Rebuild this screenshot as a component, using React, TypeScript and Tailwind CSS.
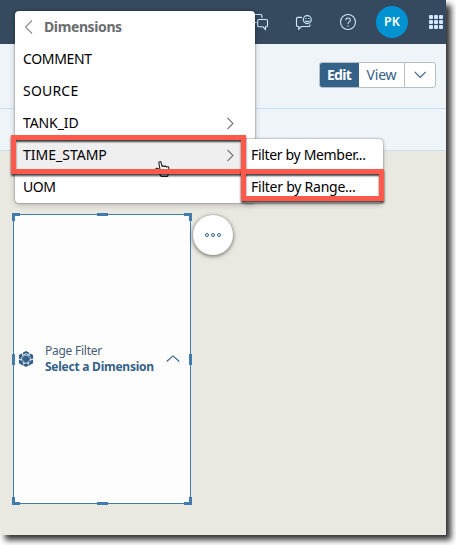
import React from "react";

function Chevron({ dir, className }: { dir: "left" | "right" | "up" | "down"; className: string }) {
  const d = {
    left: "M8 .5 1.5 7 8 13.5",
    right: "M1.5 1 7 6.5 1.5 12",
    up: "M.7 6.5 7 .9l6.3 5.6",
    down: "M.7.9 6.2 6.5 11.7.9",
  }[dir];
  return (
    <svg className={className} fill="none" stroke="currentColor" strokeWidth="1.1" aria-hidden="true">
      <path d={d} />
    </svg>
  );
}

function Header() {
  return (
    <header className="flex h-11 items-center bg-[#354a5f] pl-[252px] text-[#d1e8ff]">
      <svg className="h-5 w-[18px] shrink-0" viewBox="0 0 18 20" fill="none" stroke="currentColor" strokeWidth="1.1">
        <path d="M0 2.5h8.7q1.2 0 1.2 1.2v2.2M0 10.5h4.5" />
        <path d="M7 7.5h7.2q1.3 0 1.3 1.3v4.7q0 1.3-1.3 1.3h-.7v2.7l-2.7-2.7H7q-1.3 0-1.3-1.3V8.8q0-1.3 1.3-1.3Z" />
      </svg>
      <svg className="ml-[25px] h-5 w-[18px] shrink-0" viewBox="0 0 18 20" fill="none" stroke="currentColor" strokeWidth="1.1">
        <path d="M7 5.4H2.8q-1.3 0-1.3 1.3v6.5q0 1.3 1.3 1.3h1v2.7l2.7-2.7h7.2q1.3 0 1.3-1.3v-.7" />
        <circle cx="12.3" cy="7.6" r="4" />
        <path d="M10 8.6q2.3 2.2 4.6 0M10.8 6.1v.9M13.8 6.1v.9" />
      </svg>
      <svg className="ml-[26px] h-[18px] w-[18px] shrink-0" viewBox="0 0 18 18" fill="none" stroke="currentColor" strokeWidth="1.1">
        <circle cx="9" cy="9" r="7.5" />
        <path d="M6.8 7.2c0-3 4.7-2.8 4.5 0-.1 1.7-2.3 1.8-2.3 3.7M9 12.2v1.2" />
      </svg>
      <div className="ml-[19px] flex h-8 w-8 shrink-0 items-center justify-center rounded-full bg-[#0092d1] text-[12.5px] font-semibold text-white">PK</div>
      <div className="ml-[21px] grid shrink-0 grid-cols-3 gap-[1.5px]">
        {Array.from({ length: 9 }, (_, i) => (
          <span key={i} className="h-[3.7px] w-[3.7px] rounded-[1px] bg-current" />
        ))}
      </div>
    </header>
  );
}

const dimensions = [
  { name: "COMMENT", tracking: "tracking-[-0.34px]" },
  { name: "SOURCE", tracking: "tracking-[0.2px]" },
  { name: "TANK_ID", tracking: "tracking-[-0.1px]", nested: true },
  { name: "TIME_STAMP", tracking: "tracking-[0px]", nested: true, active: true },
  { name: "UOM", tracking: "tracking-[-0.5px]" },
];

function DimensionMenu() {
  return (
    <nav className="absolute left-[15px] top-[11px] h-[192px] w-[240px] rounded-[4px] bg-white text-[14px] leading-5 text-black shadow-[0_0_2px_#0008,0_2px_6px_#0003]">
      <div className="flex h-8 items-center pl-[9px] text-[#6a6d70]">
        <Chevron dir="left" className="h-[14px] w-[9px] text-[#8b8d8f]" />
        <span className="ml-[11px] font-bold tracking-[-0.39px]">Dimensions</span>
      </div>
      {dimensions.map((item) => (
        <div key={item.name} className={"flex h-8 items-center justify-between pl-2 pr-[20px] " + (item.active ? "bg-[#efefef]" : "")}>
          <span className={item.tracking}>{item.name}</span>
          {item.nested && <Chevron dir="right" className="h-[13px] w-[9px] text-[#75787a]" />}
        </div>
      ))}
    </nav>
  );
}

function PageFilter() {
  return (
    <section className="absolute left-[13px] top-[214px] flex h-[290px] w-[178px] items-center whitespace-nowrap border border-[#427cac] bg-[#fdfdfd] pl-1 text-[12px]">
      <svg className="h-4 w-4 shrink-0" viewBox="0 0 16 16" fill="#346187">
        <path d="m8 0 3 1.5v2L8 2.3 5 3.5v-2ZM.9 4 4.3 2.2v2.4L2.6 8.3.9 7.4Zm10.8-1.8L15.1 4v3.4l-1.7.9-1.7-3.7ZM.9 8.6l2.3 1 2.1 3-.4 1.8-4-2.2Zm14.2 0-2.3 1-2.1 3 .4 1.8 4-2.2ZM8 12.6l2.4.4.3 1.6L8 16l-2.7-1.4.3-1.6Z" />
        <path d="m8 3.1 4.3 2.4v4.9L8 12.8l-4.3-2.4V5.5Z" />
        <path d="M4.2 7.2 5.7 5 8 4.3l2.3.7 1.5 2.2M4.5 8.5l1.3 2.6L8 12l2.2-.9 1.3-2.6" fill="none" stroke="#c3d2de" strokeWidth=".7" />
      </svg>
      <div className="ml-[11px] w-[109px]">
        <div className="leading-4 tracking-[-0.25px] text-[#475e75]">Page Filter</div>
        <div className="font-bold leading-4 tracking-[-0.25px] text-[#346187]">Select a Dimension</div>
      </div>
      <Chevron dir="up" className="ml-[12px] h-2 w-[14px] text-[#346187]" />
      <svg className="absolute -left-[2px] -top-[2px] h-[292px] w-[180px]" fill="#427cac">
        <path d="M0 0h8v3H3v5H0ZM172 0h8v8h-3V3h-5ZM0 284h3v5h5v3H0ZM177 284h3v8h-8v-3h5ZM85 0h11v3H85ZM85 289h11v3H85ZM0 141h3v11H0ZM177 141h3v11h-3Z" />
      </svg>
    </section>
  );
}

function HandCursor() {
  return (
    <svg className="absolute left-[155px] top-[160px] h-[18px] w-[17px]" viewBox="0 0 17 18" fill="white" stroke="#202020" strokeWidth="1.1" strokeLinejoin="round">
      <path d="M5.2 10.5 3.9 3.2c-.3-1.7 1.8-2.1 2.2-.5l1 4c.3-1.3 2-1 2.2.1.4-1 2-.8 2.2.3.7-.8 2.3-.3 2.3.8v4l-1.2 4.5H6.2L4 12.6 1.1 9.8c-.8-1.2.5-2 1.7-1.3Z" />
      <path d="M8 11v3M10 11v3M12 11v3" />
    </svg>
  );
}

export default function App() {
  return (
    <div className="h-[545px] w-[456px] overflow-hidden bg-white font-['Noto_Sans',sans-serif]">
      <main className="relative h-[535px] w-[446px] bg-[#e9e9e1] shadow-[5px_5px_6px_0_#000c]">
        <Header />
        <div className="flex h-[65px] items-start justify-end border-b border-[#c9dff2] bg-[#eff4f9] pr-[10px] pt-[18px] text-[14px] leading-5 text-[#346187]">
          <div className="flex h-[26px] overflow-hidden rounded-[3px] border border-[#b8bec4] bg-white">
            <div className="-my-px -ml-px flex w-[40px] items-center justify-center bg-[#346187] font-bold tracking-[-0.7px] text-white">Edit</div>
            <div className="flex w-[46px] items-center justify-center border-r border-[#b8bec4] tracking-[-0.2px]">View</div>
            <div className="flex w-[30px] items-center justify-center"><Chevron dir="down" className="h-2 w-[13px]" /></div>
          </div>
        </div>
        <div className="h-[42px] border-b border-[#c9dff2] bg-[#eff4f9]" />

        <PageFilter />
        <button className="absolute left-[193px] top-[215px] flex h-10 w-10 items-center justify-center gap-[2px] rounded-full bg-white shadow-[0_1px_4px_#0009]">
          {[0, 1, 2].map((dot) => <span key={dot} className="h-1 w-1 rounded-full border border-[#346187]" />)}
        </button>

        <DimensionMenu />
        <nav className="absolute left-[243px] top-[139px] h-[64px] w-[140px] whitespace-nowrap rounded-[4px] bg-white pl-2 text-[14px] leading-5 text-black shadow-[0_0_2px_#0008,0_2px_5px_#0003]">
          <div className="flex h-8 items-center tracking-[-0.33px]">Filter by Member...</div>
          <div className="flex h-8 items-center tracking-[-0.24px]">Filter by Range...</div>
        </nav>
        <HandCursor />
        <div className="absolute left-[11px] top-[135px] h-[39px] w-[235px] border-[5px] border-[#ff594c] shadow-[0_2px_2px_#000b,inset_0_2px_2px_#000b]" />
        <div className="absolute left-[241px] top-[169px] h-[32px] w-[143px] border-[5px] border-[#ff594c] shadow-[0_2px_2px_#000b,inset_0_2px_2px_#000b]" />
      </main>
    </div>
  );
}
